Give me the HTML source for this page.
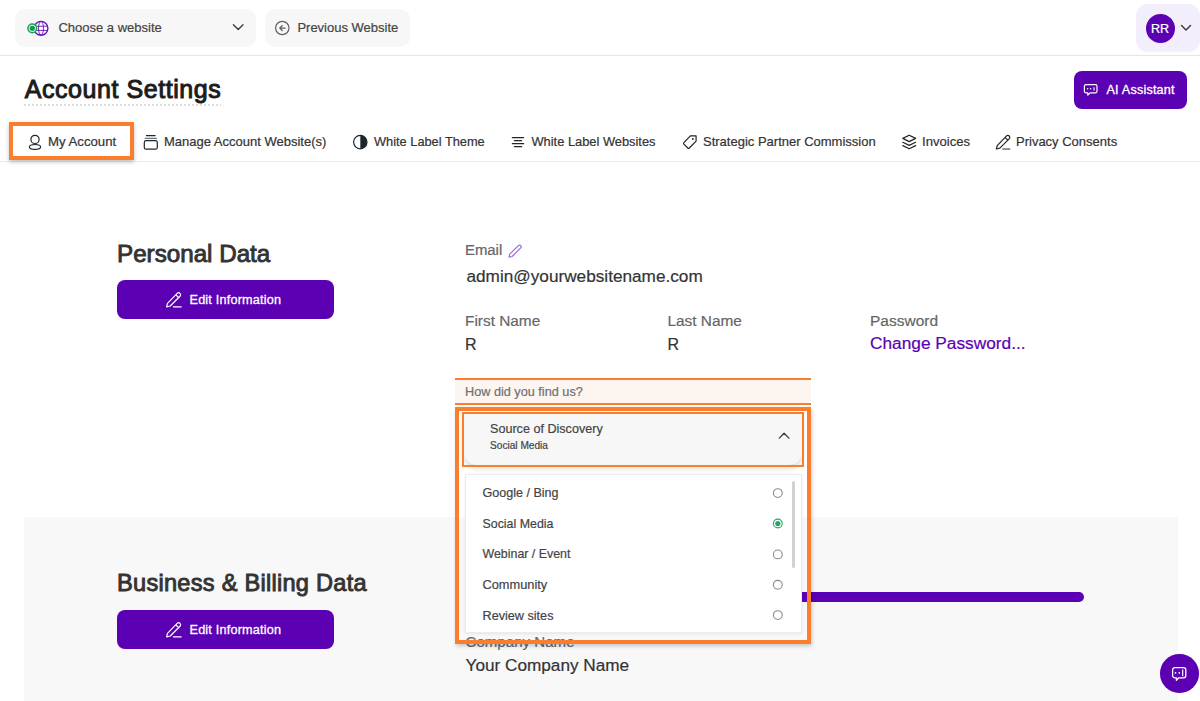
<!DOCTYPE html>
<html><head><meta charset="utf-8">
<style>
*{margin:0;padding:0;box-sizing:border-box}
html,body{width:1200px;height:701px;overflow:hidden;background:#fff;font-family:"Liberation Sans",sans-serif;position:relative}
.a{position:absolute}
.t{position:absolute;white-space:nowrap;line-height:1;-webkit-text-stroke:0.2px currentColor}
svg{position:absolute;overflow:visible}
.btn{position:absolute;background:#5c00b4;border-radius:8px}
.sb{font-weight:normal;-webkit-text-stroke:0.9px currentColor}
.sb2{font-weight:normal;-webkit-text-stroke:0.3px currentColor;letter-spacing:0.2px}
</style></head><body>

<!-- TOP BAR -->
<div class="a" style="left:15px;top:9px;width:241px;height:38px;background:#f7f7f7;border-radius:10px"></div>
<svg style="left:0;top:0" width="60" height="50">
  <circle cx="41" cy="28.3" r="6.9" fill="#fff" stroke="#6412b8" stroke-width="1.4"/>
  <ellipse cx="41" cy="28.3" rx="2.5" ry="6.9" fill="none" stroke="#6412b8" stroke-width="0.9"/>
  <path d="M34.6 26.2h12.8M34.6 30.4h12.8" stroke="#6412b8" stroke-width="0.9" fill="none"/>
  <circle cx="32.3" cy="28.3" r="5.1" fill="#1fa35c"/>
  <circle cx="32.3" cy="28.3" r="3.6" fill="#d8f1e2"/>
  <circle cx="32.3" cy="28.3" r="2.6" fill="#129c50"/>
</svg>
<div class="t" style="left:58.4px;top:21px;font-size:13px;color:#444">Choose a website</div>
<svg style="left:0;top:0" width="260" height="50"><path d="M233.4 24.8l4.8 4.8 4.8-4.8" stroke="#3a3a3a" stroke-width="1.35" fill="none" stroke-linecap="round" stroke-linejoin="round"/></svg>

<div class="a" style="left:265px;top:9px;width:145px;height:38px;background:#f7f7f7;border-radius:10px"></div>
<svg style="left:0;top:0" width="300" height="50">
  <circle cx="282.3" cy="28" r="6.7" fill="none" stroke="#606060" stroke-width="1.2"/>
  <path d="M285.2 28.1h-5.4M282.2 25.7l-2.5 2.4 2.5 2.4" stroke="#606060" stroke-width="1.3" fill="none" stroke-linecap="round" stroke-linejoin="round"/>
</svg>
<div class="t" style="left:297.4px;top:21px;font-size:13px;color:#444">Previous Website</div>

<div class="a" style="left:1136px;top:4px;width:64px;height:48px;background:#f3eefc;border-radius:12px"></div>
<div class="a" style="left:1145.5px;top:13.5px;width:29px;height:29px;border-radius:50%;background:#5c00b4"></div>
<div class="t" style="left:1148px;top:23.2px;width:24px;text-align:center;font-size:12.6px;color:#fff">RR</div>
<svg style="left:0;top:0" width="1200" height="50"><path d="M1181.5 25.5l4.5 4.5 4.5-4.5" stroke="#333" stroke-width="1.4" fill="none" stroke-linecap="round" stroke-linejoin="round"/></svg>

<div class="a" style="left:0;top:55px;width:1200px;height:1px;background:#e6e6e6"></div>

<!-- HEADER -->
<div class="t sb" style="left:24.8px;top:77.3px;font-size:25px;letter-spacing:0.55px;color:#1c1c1c;-webkit-text-stroke:1px #1c1c1c">Account Settings</div>
<div class="a" style="left:24px;top:104px;width:197px;height:1.5px;background:repeating-linear-gradient(90deg,#dedede 0 2.4px,transparent 2.4px 4px)"></div>

<div class="btn" style="left:1074px;top:71px;width:113px;height:38px"></div>
<svg style="left:0;top:0" width="1200" height="120">
  <path d="M1086 84.6h9.4a1.6 1.6 0 0 1 1.6 1.6v5a1.6 1.6 0 0 1-1.6 1.6h-5.2l-2.4 2.4v-2.4h-1.8a1.6 1.6 0 0 1-1.6-1.6v-5a1.6 1.6 0 0 1 1.6-1.6z" fill="none" stroke="#fff" stroke-width="1.2" stroke-linejoin="round"/>
  <circle cx="1087.6" cy="88.7" r="0.8" fill="#fff"/><circle cx="1090.6" cy="88.7" r="0.8" fill="#fff"/>
  <path d="M1094 87.2v3.2" stroke="#fff" stroke-width="1.1"/>
</svg>
<div class="t sb2" style="left:1106.5px;top:84.1px;font-size:12.6px;color:#fff">AI Assistant</div>

<!-- TABS -->
<div class="a" style="left:0;top:161px;width:1200px;height:1px;background:#ececec"></div>
<div class="a" style="left:9px;top:122px;width:125px;height:38px;border:4px solid #fb7e2e;box-shadow:0 2px 4px rgba(0,0,0,.25)"></div>
<svg style="left:0;top:0" width="1200" height="170" fill="none" stroke="#1c262b" stroke-width="1.2" stroke-linecap="round" stroke-linejoin="round">
  <circle cx="35" cy="139.4" r="4.1"/>
  <ellipse cx="35" cy="146.9" rx="5.6" ry="2.4"/>
  <path d="M146.5 135.6h8.6" stroke-width="1.3"/>
  <path d="M145.2 138.3h11.2" stroke="#6b7378" stroke-width="1.3"/>
  <rect x="144.3" y="140.6" width="13" height="8.6" rx="1.8"/>
  <circle cx="360.3" cy="142.1" r="6.7"/>
  <path d="M360.3 135.4a6.7 6.7 0 0 1 0 13.4z" fill="#1c262b" stroke="none"/>
  <path d="M512.4 137.6h11.2M514.4 140.7h7.2M512.4 143.7h11.2M514.4 146.7h7.2" stroke-width="1.3"/>
  <path d="M690.4 135.9H696.1V141.2L689.3 148a1.1 1.1 0 0 1-1.5 0L683.9 144.1a1.1 1.1 0 0 1 0-1.5Z"/>
  <circle cx="692.8" cy="139" r="0.9" fill="#1c262b" stroke="none"/>
  <path d="M909.2 135.2l6.4 3.2-6.4 3.2-6.4-3.2z"/>
  <path d="M902.8 142.2l6.4 3.2 6.4-3.2M902.8 145.6l6.4 3.2 6.4-3.2"/>
  <path d="M1006.6 135.8a2 2 0 0 1 2.8 2.8l-9.6 9.6-3.4.8.8-3.4z M1005.2 137.6l2.6 2.6"/>
  <path d="M1002.8 149h7"/>
</svg>
<div class="t" style="left:48px;top:135.4px;font-size:13.2px;color:#333">My Account</div>
<div class="t" style="left:164px;top:135.4px;font-size:13px;color:#333">Manage Account Website(s)</div>
<div class="t" style="left:374px;top:136.4px;font-size:12.8px;color:#333">White Label Theme</div>
<div class="t" style="left:531.5px;top:136.4px;font-size:12.85px;color:#333">White Label Websites</div>
<div class="t" style="left:703px;top:135.4px;font-size:13px;color:#333">Strategic Partner Commission</div>
<div class="t" style="left:922px;top:135.4px;font-size:13.1px;color:#333">Invoices</div>
<div class="t" style="left:1016px;top:135.4px;font-size:13px;color:#333">Privacy Consents</div>

<!-- PERSONAL DATA -->
<div class="t sb" style="left:117px;top:242.3px;font-size:24.2px;color:#333">Personal Data</div>
<div class="btn" style="left:117px;top:280px;width:217px;height:39px"></div>
<svg style="left:0;top:0" width="400" height="330" fill="none" stroke="#fff" stroke-width="1.2" stroke-linecap="round" stroke-linejoin="round">
  <path d="M177.4 293.2a2 2 0 0 1 2.8 2.8l-10 10-3.6.9.9-3.6z M176 295l2.8 2.8"/>
  <path d="M173.4 306.8h7.8"/>
</svg>
<div class="t sb2" style="left:189.5px;top:294.1px;font-size:12.65px;color:#fff">Edit Information</div>

<div class="t" style="left:465px;top:243.4px;font-size:14.9px;color:#666">Email</div>
<svg style="left:0;top:0" width="600" height="300" fill="none" stroke="#a066e6" stroke-width="1.2" stroke-linecap="round" stroke-linejoin="round">
  <path d="M518.4 245.6a1.6 1.6 0 0 1 2.3 2.3l-8.6 8.6-3 .6.6-3z"/>
</svg>
<div class="t" style="left:466.5px;top:267.6px;font-size:17.2px;color:#333">admin@yourwebsitename.com</div>

<div class="t" style="left:465px;top:313.2px;font-size:15.4px;color:#666">First Name</div>
<div class="t" style="left:465px;top:336.5px;font-size:16px;color:#333">R</div>
<div class="t" style="left:667.5px;top:313.2px;font-size:15.4px;color:#666">Last Name</div>
<div class="t" style="left:667.5px;top:336.5px;font-size:16px;color:#333">R</div>
<div class="t" style="left:870px;top:313.2px;font-size:15.5px;color:#666">Password</div>
<div class="t" style="left:870px;top:335px;font-size:17.3px;color:#5c00b4">Change Password...</div>

<!-- GRAY SECTION -->
<div class="a" style="left:24px;top:517px;width:1153.6px;height:184px;background:#f8f8f8"></div>
<div class="t sb" style="left:117px;top:571.7px;font-size:23.6px;letter-spacing:0.26px;color:#333">Business &amp; Billing Data</div>
<div class="btn" style="left:117px;top:610px;width:217px;height:39px"></div>
<svg style="left:0;top:0" width="400" height="701" fill="none" stroke="#fff" stroke-width="1.2" stroke-linecap="round" stroke-linejoin="round">
  <path d="M177.4 623.2a2 2 0 0 1 2.8 2.8l-10 10-3.6.9.9-3.6z M176 625l2.8 2.8"/>
  <path d="M173.4 636.8h7.8"/>
</svg>
<div class="t sb2" style="left:189.5px;top:624.1px;font-size:12.65px;color:#fff">Edit Information</div>

<div class="a" style="left:465px;top:592px;width:619px;height:10px;border-radius:5px;background:#5c00b4"></div>
<div class="t" style="left:465.5px;top:634.2px;font-size:15.1px;color:#6a6a6a">Company Name</div>
<div class="t" style="left:465.5px;top:656.5px;font-size:17.2px;color:#333">Your Company Name</div>

<div class="a" style="left:1160px;top:654.2px;width:38.5px;height:38.5px;border-radius:50%;background:#5c00b4"></div>
<svg style="left:0;top:0" width="1200" height="701">
  <path d="M1174.8 667.6h8.8a2.2 2.2 0 0 1 2.2 2.2v5.8a2.2 2.2 0 0 1-2.2 2.2h-4.8l-2.4 2.4v-2.4h-1.6a2.2 2.2 0 0 1-2.2-2.2v-5.8a2.2 2.2 0 0 1 2.2-2.2z" fill="none" stroke="#fff" stroke-width="1.3" stroke-linejoin="round"/>
  <circle cx="1175.5" cy="672.8" r="0.9" fill="#fff"/><circle cx="1179.3" cy="672.8" r="0.9" fill="#fff"/>
  <path d="M1182.7 669.4v6.8" stroke="#fff" stroke-width="1.2"/>
</svg>

<!-- HOW DID YOU FIND US -->
<div class="a" style="left:455px;top:378px;width:356px;height:27px;background:#fdf5f0;border-top:2px solid #fb7e2e;border-bottom:2px solid #fb7e2e"></div>
<div class="t" style="left:465px;top:386px;font-size:12.7px;color:#707070">How did you find us?</div>

<!-- DROPDOWN -->
<div class="a" style="left:465px;top:474px;width:337px;height:159px;background:#fff;border:1px solid #ececec;box-shadow:0 1px 3px rgba(0,0,0,.08)"></div>
<div class="a" style="left:792.2px;top:481px;width:2.6px;height:87px;background:#d2d2d2;border-radius:2px"></div>
<div class="t" style="left:482.5px;top:486.5px;font-size:12.55px;color:#444">Google / Bing</div>
<div class="t" style="left:482.5px;top:517.8px;font-size:12.4px;color:#444">Social Media</div>
<div class="t" style="left:482.5px;top:548.2px;font-size:12.4px;color:#444">Webinar / Event</div>
<div class="t" style="left:482.5px;top:578.5px;font-size:12.8px;color:#444">Community</div>
<div class="t" style="left:482.5px;top:609.6px;font-size:12.65px;color:#444">Review sites</div>
<svg style="left:0;top:0" width="1200" height="701" fill="none">
  <circle cx="777.8" cy="493.1" r="4.4" stroke="#8a8a8a" stroke-width="1.1"/>
  <circle cx="777.8" cy="523.5" r="4.4" stroke="#22a862" stroke-width="1.1"/>
  <circle cx="777.8" cy="523.5" r="2.6" fill="#22a862"/>
  <circle cx="777.8" cy="554.4" r="4.4" stroke="#8a8a8a" stroke-width="1.1"/>
  <circle cx="777.8" cy="584.8" r="4.4" stroke="#8a8a8a" stroke-width="1.1"/>
  <circle cx="777.8" cy="615.1" r="4.4" stroke="#8a8a8a" stroke-width="1.1"/>
</svg>

<div class="a" style="left:464px;top:414px;width:338px;height:51px;background:#f7f7f7;border-radius:0 0 13px 13px;box-shadow:0 3px 6px rgba(0,0,0,.16)"></div>
<div class="a" style="left:462px;top:412px;width:342px;height:55px;border:2px solid #fb7e2e"></div>
<div class="t" style="left:490px;top:422.6px;font-size:12.6px;color:#444">Source of Discovery</div>
<div class="t" style="left:490px;top:440.8px;font-size:10.15px;color:#444">Social Media</div>
<svg style="left:0;top:0" width="1200" height="701"><path d="M779.3 438.1l4.8-4.8 4.8 4.8" stroke="#3a3a3a" stroke-width="1.3" fill="none" stroke-linecap="round" stroke-linejoin="round"/></svg>

<div class="a" style="left:455px;top:407px;width:356px;height:237px;border:4px solid #fb7e2e;box-shadow:1px 2px 4px rgba(0,0,0,.2)"></div>

</body></html>
